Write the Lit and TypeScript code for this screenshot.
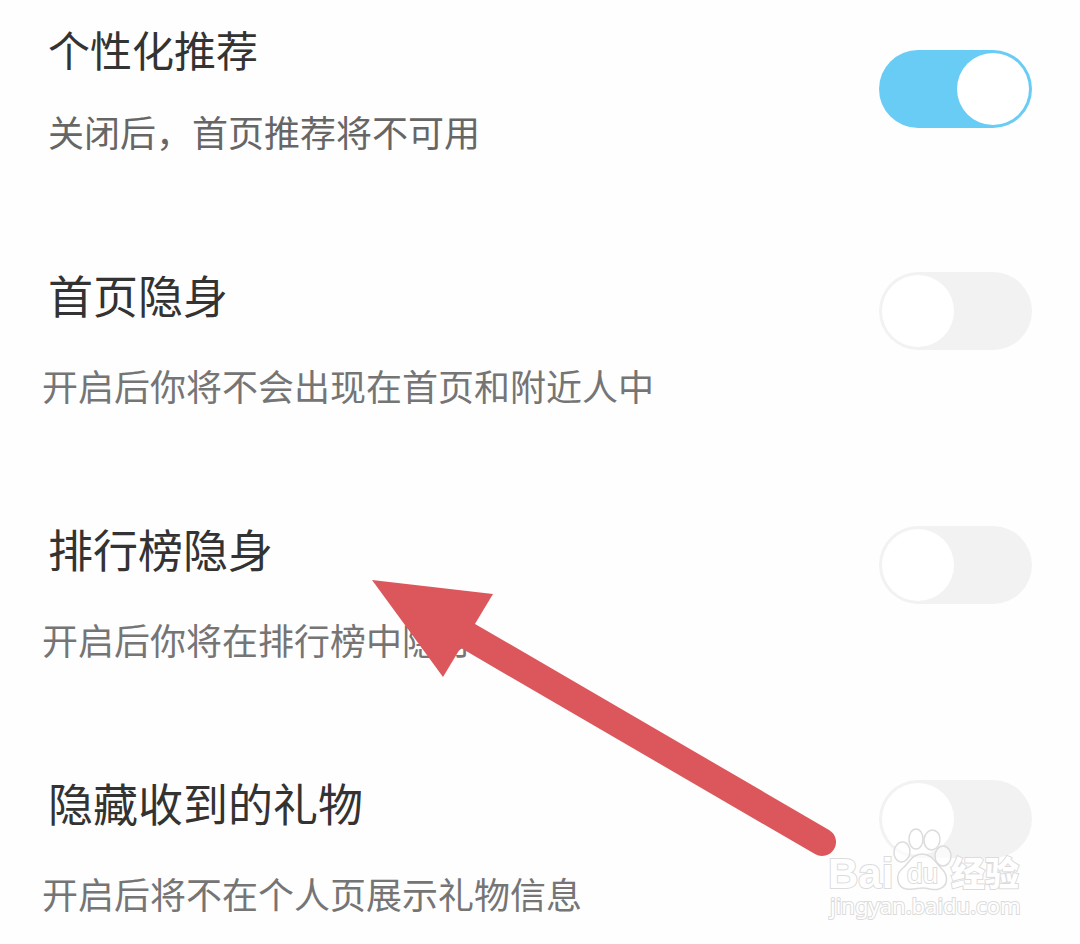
import { LitElement, html, css } from "lit";
import { customElement, property, state } from "lit/decorators.js";

interface Setting {
  id: string;
  title: string;
  desc: string;
  on: boolean;
  lead?: boolean;
}

@customElement("toggle-row")
class ToggleRow extends LitElement {
  @property({ attribute: false }) item!: Setting;

  static styles = css`
    :host {
      display: block;
    }
    .row {
      display: flex;
      justify-content: space-between;
      align-items: flex-start;
      gap: 24px;
    }
    .text {
      display: flex;
      flex-direction: column;
      gap: 36px;
      min-width: 0;
    }
    .title {
      padding-left: 6px;
      font-size: 45px;
      line-height: 60px;
      color: #333;
    }
    .desc {
      margin: 0;
      font-size: 36px;
      line-height: 48px;
      color: #757575;
    }
    .switch {
      appearance: none;
      position: relative;
      flex: none;
      width: 153px;
      height: 78px;
      margin: 7px 0 0;
      border-radius: 39px;
      background: #f2f2f2;
      cursor: pointer;
    }
    .switch::before {
      content: "";
      position: absolute;
      top: 3px;
      left: 3px;
      width: 72px;
      height: 72px;
      border-radius: 50%;
      background: #fff;
    }
    .switch:checked {
      background: #68ccf5;
    }
    .switch:checked::before {
      left: auto;
      right: 3px;
    }
    .lead .text {
      gap: 28px;
    }
    .lead .title {
      font-size: 42px;
    }
    .lead .desc {
      padding-left: 6px;
      color: #666;
    }
    .lead .switch {
      margin-top: 31px;
    }
  `;

  render() {
    const { id, title, desc, on, lead } = this.item;
    return html`
      <div class="row ${lead ? "lead" : ""}">
        <div class="text">
          <label class="title" for=${id}>${title}</label>
          <p class="desc" id="${id}-desc">${desc}</p>
        </div>
        <input class="switch" type="checkbox" role="switch" id=${id} aria-describedby="${id}-desc" .checked=${on} />
      </div>
    `;
  }
}

@customElement("app-root")
class AppRoot extends LitElement {
  @state() private items: Setting[] = [
    { id: "recommend", title: "个性化推荐", desc: "关闭后，首页推荐将不可用", on: true, lead: true },
    { id: "home", title: "首页隐身", desc: "开启后你将不会出现在首页和附近人中", on: false },
    { id: "rank", title: "排行榜隐身", desc: "开启后你将在排行榜中隐身", on: false },
    { id: "gifts", title: "隐藏收到的礼物", desc: "开启后将不在个人页展示礼物信息", on: false },
  ];

  static styles = css`
    :host {
      display: block;
      position: relative;
      overflow: hidden;
      background: #fefefe;
      font-family: "Noto Sans CJK SC", sans-serif;
    }
    .list {
      display: flex;
      flex-direction: column;
      gap: 110px;
      padding: 19px 48px 27px 42px;
    }
    .arrow {
      position: absolute;
      left: 372px;
      top: 580px;
      pointer-events: none;
    }
    .mark {
      position: absolute;
      right: 52px;
      top: 824px;
      pointer-events: none;
    }
    .brand,
    .site {
      fill: #fff;
      stroke: #dcdcdc;
      stroke-width: 2px;
      paint-order: stroke;
    }
    .brand {
      font: 700 42px "Liberation Sans", sans-serif;
    }
    .du {
      font: 400 28px "Liberation Sans", sans-serif;
    }
    .cn {
      font: 900 34px "Noto Sans CJK SC", sans-serif;
    }
    .site {
      font: 400 22px "Noto Sans", sans-serif;
    }
    .paw {
      fill: #fff;
      fill-opacity: 0.6;
      stroke: #dcdcdc;
      stroke-width: 1.5px;
    }
  `;

  render() {
    return html`
      <main class="list">
        ${this.items.map((item) => html`<toggle-row .item=${item}></toggle-row>`)}
      </main>
      <svg class="arrow" width="466" height="278" viewBox="0 0 466 278" aria-hidden="true">
        <path d="M96 56L450 262" stroke="#dc575c" stroke-width="28" stroke-linecap="round" />
        <path d="M0 0L121 14L71 97Z" fill="#dc575c" />
      </svg>
      <svg class="mark" width="200" height="100" viewBox="0 0 200 100">
        <text class="brand" x="0" y="64">Bai</text>
        <g class="paw">
          <ellipse cx="74" cy="28" rx="8" ry="10" transform="rotate(8 74 28)" />
          <ellipse cx="88" cy="15" rx="7" ry="10" />
          <ellipse cx="104" cy="16" rx="8" ry="10" transform="rotate(10 104 16)" />
          <ellipse cx="115" cy="32" rx="8" ry="10" />
          <path d="M94 30C84 30 81 39 75 44C67 50 68 64 79 65C85 66 90 64 95 64C101 64 106 67 111 65C121 62 120 51 114 45C107 38 104 30 94 30Z" />
        </g>
        <text class="brand du" x="79" y="59">du</text>
        <text class="brand cn" x="123" y="62">经验</text>
        <text class="site" x="2" y="90">jingyan.baidu.com</text>
      </svg>
    `;
  }
}
